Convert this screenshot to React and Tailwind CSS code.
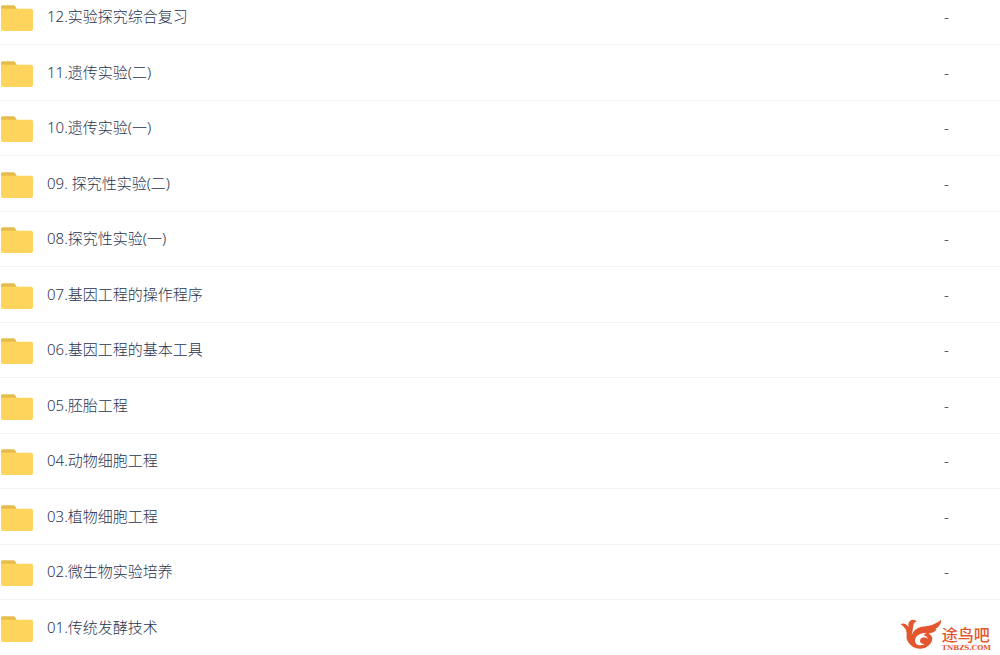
import React from "react";

const folders = [
  { name: "12.实验探究综合复习", size: "-" },
  { name: "11.遗传实验(二)", size: "-" },
  { name: "10.遗传实验(一)", size: "-" },
  { name: "09. 探究性实验(二)", size: "-" },
  { name: "08.探究性实验(一)", size: "-" },
  { name: "07.基因工程的操作程序", size: "-" },
  { name: "06.基因工程的基本工具", size: "-" },
  { name: "05.胚胎工程", size: "-" },
  { name: "04.动物细胞工程", size: "-" },
  { name: "03.植物细胞工程", size: "-" },
  { name: "02.微生物实验培养", size: "-" },
  { name: "01.传统发酵技术", size: "" },
];

const FolderIcon = () => (
  <svg viewBox="0 0 32 26" className="w-8 h-[26px] shrink-0" aria-hidden="true">
    <path d="M0 9V1.8Q0 .2 1.6 .2H12.4Q13.6 .2 14.2 1.2L16 4.2V9Z" fill="#e6bd4d" />
    <path d="M0 3.8H30.2Q32 3.8 32 5.6V24Q32 26 30 26H2Q0 26 0 24Z" fill="#ffd45c" />
  </svg>
);

const SiteLogo = () => (
  <div className="absolute right-[9px] bottom-1 flex items-end text-[#e4572e]">
    <svg viewBox="28 36 126 100" className="w-[42px] h-[34px]" aria-hidden="true">
      <path
        d="M30 54Q38 49 45 54Q50 57 54 62Q50 47 62 41Q71 38 79 45Q69 47 68 58Q66 72 63 86Q70 66 92 61Q132 58 152 40Q151 58 134 68L138 69Q130 80 113 82Q125 86 125 98Q122 116 104 124Q84 132 66 121Q44 106 48 84Q49 66 30 54Z"
        fill="currentColor"
      />
      <path
        d="M108 80Q84 79 75 94Q69 108 80 115Q92 120 102 113Q90 114 88 105Q88 95 99 93Q108 93 112 98Q110 90 99 87Q100 82 108 80Z"
        fill="#fff"
      />
    </svg>
    <div className="flex flex-col items-start">
      <span className="text-base leading-4 font-medium">途鸟吧</span>
      <span className="font-['DejaVu_Serif',serif] font-bold text-[7px] leading-[9px]">
        TNBZS.COM
      </span>
    </div>
  </div>
);

const App = () => {
  return (
    <div className="relative w-full bg-white overflow-hidden font-['Noto_Sans','Noto_Sans_CJK_SC',sans-serif]">
      <table className="w-full border-separate border-spacing-0 text-[15px] leading-5 font-light text-[#27344f]">
        <tbody>
          {folders.map((folder) => (
            <tr key={folder.name} className="group">
              <td className="h-[55px] group-even:h-14 group-first:h-[45px] group-last:h-[55px] p-0 pl-px pb-[13px] align-bottom border-b border-[#f3f4f6]">
                <a href="#" className="flex items-center gap-[14px]">
                  <FolderIcon />
                  <span className="pb-1">{folder.name}</span>
                </a>
              </td>
              <td className="w-14 p-0 pb-[18px] align-bottom border-b border-[#f3f4f6]">
                {folder.size}
              </td>
            </tr>
          ))}
        </tbody>
      </table>
      <SiteLogo />
    </div>
  );
};

export default App;
